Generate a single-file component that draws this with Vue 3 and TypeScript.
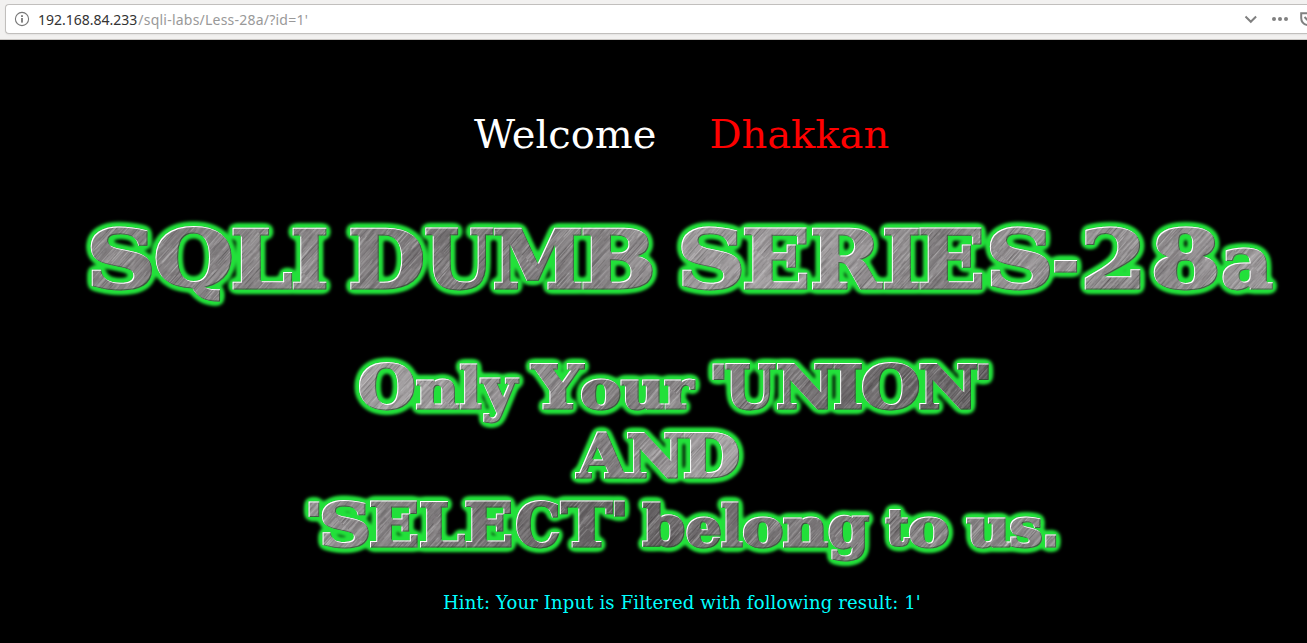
<script setup lang="ts">
interface Glyph {
  ch: string
  x: number
  y: number
  size: number
  length: number
}
// character, left edge, right edge, optional top and bottom edges
type Box = [string, number, number, number?, number?]
interface Row {
  top: number
  base: number
  xTop: number
  words: Box[][]
}

const OUTLINE = 1.4
const ctx = document.createElement('canvas').getContext('2d')!
const isSquare = (ch: string) => ch === '-' || ch === '.'

const rows: Row[] = [
  {
    top: 228, base: 289, xTop: 246.5,
    words: [
      [['S', 91, 152], ['Q', 155.5, 231.5, 225.8, 302], ['L', 232.5, 292.2], ['I', 292.5, 326.5]],
      [['D', 350.5, 423.5], ['U', 425, 493.8], ['M', 494, 582], ['B', 582.5, 653]],
      [['S', 681.5, 741.5], ['E', 744, 807.5], ['R', 812, 883.5], ['I', 884, 919], ['E', 919.5, 982.5], ['S', 990, 1050], ['-', 1054, 1077.5, 261, 273.5], ['2', 1085, 1140.5], ['8', 1154, 1217.5], ['a', 1222.5, 1272.5]],
    ],
  },
  {
    top: 363.3, base: 409.2, xTop: 377.5,
    words: [
      [['O', 359, 414.5], ['n', 416, 459.3], ['l', 459.6, 481.5], ['y', 479.5, 519.5, 377.7, 424]],
      [['Y', 530, 585], ['o', 581, 620.3], ['u', 620.5, 663.8], ['r', 664, 695.5]],
      [["'", 713, 724, 363.5, 380], ['U', 725.2, 776], ['N', 777, 833.8], ['I', 834, 861.8], ['O', 862, 919], ['N', 919.2, 977], ["'", 978, 988.5, 363.5, 380]],
    ],
  },
  {
    top: 432, base: 478.5, xTop: 447,
    words: [[['A', 575, 629], ['N', 627, 683.8], ['D', 684, 739.5]]],
  },
  {
    top: 501.3, base: 547, xTop: 515,
    words: [
      [["'", 309, 319, 501.5, 517], ['S', 322, 368.5], ['E', 370, 417.5], ['L', 420, 465], ['E', 465.2, 511.5], ['C', 516, 559.5], ['T', 560, 613], ["'", 614.2, 624.5, 501.5, 517.5]],
      [['b', 642, 684.3], ['e', 686.5, 721], ['l', 721.2, 742.8], ['o', 743, 782.5], ['n', 783, 828], ['g', 828.5, 869.5, 514.3, 561.5]],
      [['t', 885, 910, 509, 547.5], ['o', 909, 948.5]],
      [['u', 966, 1009.8], ['s', 1010, 1042], ['.', 1045, 1056.3, 534, 547]],
    ],
  },
]

function place(row: Row, box: Box): Glyph {
  const [ch, l, r, t, b] = box
  ctx.font = `bold 200px "${isSquare(ch) ? 'DejaVu Sans' : 'DejaVu Serif'}"`
  const m = ctx.measureText(ch)
  const inkH = m.actualBoundingBoxAscent + m.actualBoundingBoxDescent
  const inkW = m.actualBoundingBoxRight + m.actualBoundingBoxLeft
  let size: number
  let y: number
  if (t !== undefined && b !== undefined) {
    size = ((b - t - OUTLINE * 2) / inkH) * 200
    y = b - OUTLINE - (m.actualBoundingBoxDescent * size) / 200
  } else {
    const small = 'anouresy'.includes(ch)
    const height = row.base - (small ? row.xTop : row.top) - OUTLINE * 2
    const ratio = small ? 0.55 : ch === 'l' || ch === 'b' ? 0.76 : 0.729
    size = height / ratio
    y = row.base - OUTLINE
  }
  const k = (r - l - OUTLINE * 2) / inkW
  return { ch, size, y, x: l + OUTLINE + m.actualBoundingBoxLeft * k, length: m.width * k }
}
const words: Glyph[][] = rows.flatMap(row => row.words.map(w => w.map(b => place(row, b))))

// Brushed metal streaks, from a small seeded generator
let seed = 28
const rnd = () => {
  seed = (seed * 16807) % 2147483647
  return seed / 2147483647
}
const streaks = Array.from({ length: 2200 }, () => ({
  x: rnd() * 160,
  y: rnd() * 180 - 25,
  h: 10 + rnd() * 30,
  w: 0.35 + rnd() * 0.5,
  fill: rnd() > 0.5 ? '#fff' : '#201c1e',
  o: 0.06 + rnd() * 0.2,
}))
const tones: { top: number; h: number; stops: [number, string][] }[] = [
  { top: 200, h: 130, stops: [[0, '#8c8889'], [0.13, '#827e80'], [0.24, '#8e8a8c'], [0.33, '#767274'], [0.45, '#848082'], [0.54, '#a19d9f'], [0.64, '#9c989a'], [0.72, '#827e80'], [0.78, '#989496'], [0.88, '#8c888a'], [1, '#a5a1a3']] },
  { top: 330, h: 95, stops: [[0.27, '#a6a2a4'], [0.38, '#989496'], [0.46, '#7c787a'], [0.53, '#8c888a'], [0.6, '#777375'], [0.68, '#686466'], [0.76, '#625e60']] },
  { top: 425, h: 67, stops: [[0.44, '#787476'], [0.5, '#928e90'], [0.56, '#a8a4a6']] },
  { top: 492, h: 90, stops: [[0.23, '#969294'], [0.32, '#827e80'], [0.41, '#6c686a'], [0.49, '#5f5b5d'], [0.55, '#747072'], [0.66, '#7e7a7c'], [0.81, '#8e8a8c']] },
]
</script>

<template>
  <div class="window">
    <header class="toolbar">
      <div class="address">
        <svg class="info" viewBox="0 0 16 16" width="16" height="16">
          <circle cx="8" cy="8" r="6.6" fill="none" stroke="#777" stroke-width="1.1" />
          <rect x="7.1" y="7" width="1.8" height="4.6" fill="#777" />
          <rect x="7.1" y="4.2" width="1.8" height="1.8" fill="#777" />
        </svg>
        <span class="url"><span class="host">192.168.84.233</span><span class="path">/sqli-labs/Less-28a/?id=1'</span></span>
        <svg class="tools" viewBox="0 0 70 28" width="70" height="28">
          <path d="M8.5 11.5 L13.8 16.8 L19.1 11.5" fill="none" stroke="#808080" stroke-width="2" />
          <g fill="#808080">
            <circle cx="37" cy="14" r="2" /><circle cx="43" cy="14" r="2" /><circle cx="49" cy="14" r="2" />
          </g>
          <path d="M64.2 8.3 H78 V13 Q78 20 71 20.3 Q64.2 19 64.2 13 Z" fill="none" stroke="#808080" stroke-width="2" />
          <path d="M67.5 12 L71 15.5 L74.5 12" fill="none" stroke="#808080" stroke-width="2" />
        </svg>
      </div>
    </header>
    <main class="page">
      <div class="greeting"><span class="welcome">Welcome</span><span class="name">Dhakkan</span></div>
      <svg class="banner" viewBox="0 200 1307 370" width="1307" height="370">
        <defs>
          <linearGradient v-for="(t, i) in tones" :id="'tone' + i" :key="i" gradientUnits="userSpaceOnUse" x1="0" y1="0" x2="1307" y2="0">
            <stop v-for="s in t.stops" :key="s[0]" :offset="s[0]" :stop-color="s[1]" />
          </linearGradient>
          <pattern id="brush" patternUnits="userSpaceOnUse" width="160" height="160" patternTransform="rotate(42)">
            <rect v-for="(s, i) in streaks" :key="i" :x="s.x" :y="s.y" :width="s.w" :height="s.h" :fill="s.fill" :opacity="s.o" />
          </pattern>
          <pattern id="metal" patternUnits="userSpaceOnUse" x="0" y="200" width="1307" height="400">
            <g transform="translate(0 -200)">
              <rect v-for="(t, i) in tones" :key="i" x="0" :y="t.top" width="1307" :height="t.h" :fill="`url(#tone${i})`" />
              <rect x="0" y="200" width="1307" height="400" fill="url(#brush)" />
            </g>
          </pattern>
          <filter id="glow" filterUnits="userSpaceOnUse" x="0" y="200" width="1307" height="380" color-interpolation-filters="sRGB">
            <feGaussianBlur in="SourceAlpha" stdDeviation="3.2" result="soft" />
            <feComponentTransfer in="soft" result="spread"><feFuncA type="linear" slope="8" intercept="-0.12" /></feComponentTransfer>
            <feGaussianBlur in="spread" stdDeviation="1" result="halo" />
            <feFlood flood-color="#22e03a" />
            <feComposite in2="halo" operator="in" result="green" />
            <feOffset in="SourceAlpha" dx="1" dy="1" result="downRight" />
            <feFlood flood-color="#fff" />
            <feComposite in2="SourceAlpha" operator="in" />
            <feComposite in2="downRight" operator="out" result="light" />
            <feOffset in="SourceAlpha" dx="-1" dy="-1" result="upLeft" />
            <feFlood flood-color="#1c4a20" flood-opacity="0.65" />
            <feComposite in2="SourceAlpha" operator="in" />
            <feComposite in2="upLeft" operator="out" result="shade" />
            <feMerge>
              <feMergeNode in="green" />
              <feMergeNode in="SourceGraphic" />
              <feMergeNode in="shade" />
              <feMergeNode in="light" />
            </feMerge>
          </filter>
        </defs>
        <g class="letters" filter="url(#glow)">
          <text v-for="(w, i) in words" :key="i"><tspan v-for="(g, j) in w" :key="j" :class="{ square: isSquare(g.ch) }" :x="g.x" :y="g.y" :font-size="g.size" :textLength="g.length" lengthAdjust="spacingAndGlyphs">{{ g.ch }}</tspan></text>
        </g>
      </svg>
      <p class="hint">Hint: Your Input is Filtered with following result: 1'</p>
    </main>
  </div>
</template>

<style>
body {
  margin: 0;
  background: #000;
  overflow: hidden;
}
</style>

<style scoped>
.window {
  width: 1307px;
  height: 643px;
  overflow: hidden;
  background: #000;
}
.toolbar {
  box-sizing: border-box;
  height: 40px;
  padding: 4px 0 0 5px;
  background: #f2f1f0;
  border-bottom: 1px solid #c9c6c3;
}
.address {
  box-sizing: border-box;
  display: flex;
  align-items: center;
  height: 30px;
  padding-left: 8px;
  background: #fff;
  border: 1px solid #c1bfbd;
  border-right: 0;
  border-radius: 4px 0 0 4px;
  box-shadow: 0 1px 2px rgba(0, 0, 0, 0.06);
}
.info {
  flex: none;
}
.url {
  flex: 1;
  margin-left: 8px;
  padding-top: 2px;
  font: 14px/20px "Noto Sans", sans-serif;
  white-space: pre;
}
.host {
  color: #333;
}
.path {
  margin-left: 1px;
  color: #999;
  letter-spacing: 0.22px;
}
.tools {
  flex: none;
}
.page {
  display: flex;
  flex-direction: column;
}
.greeting {
  display: flex;
  gap: 53px;
  height: 90px;
  padding: 70px 0 0 474px;
  font: 40px/48px "DejaVu Serif", serif;
}
.welcome {
  color: #fff;
}
.name {
  color: #f00;
}
.banner {
  display: block;
}
.letters {
  font-family: "DejaVu Serif", serif;
  font-weight: bold;
  fill: url(#metal);
  stroke: url(#metal);
  stroke-width: 2.8px;
  stroke-linejoin: miter;
}
.square {
  font-family: "DejaVu Sans", sans-serif;
}
.hint {
  margin: 21px 0 0 443px;
  font: 18px/24px "DejaVu Serif", serif;
  color: #0ff;
  letter-spacing: 0.15px;
  white-space: pre;
}
</style>
